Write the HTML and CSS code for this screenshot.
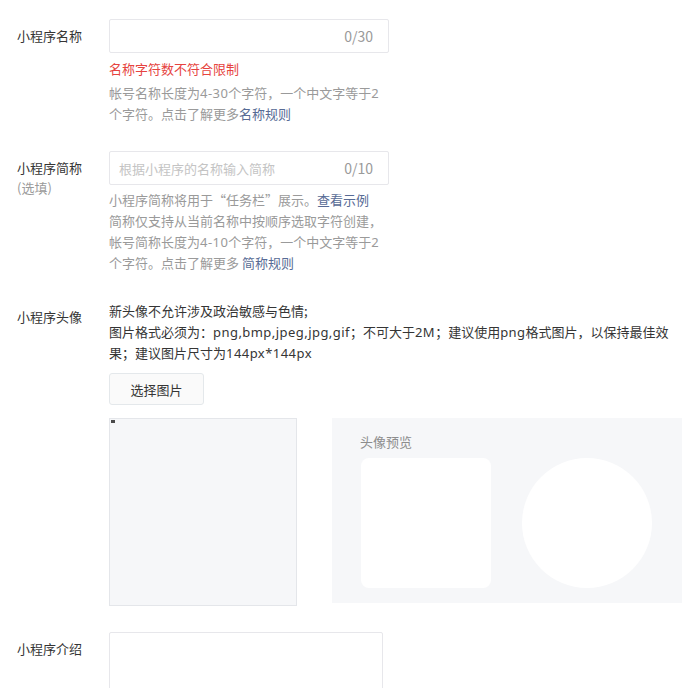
FILE: index.html
```html
<!DOCTYPE html>
<html lang="zh-CN">
<head>
<meta charset="utf-8">
<title>小程序信息</title>
<link rel="stylesheet" href="styles.css">
</head>
<body>
<div class="form">
  <div class="row">
    <div class="label">小程序名称</div>
    <div class="content">
      <div class="input"><span class="value"></span><span class="counter">0/30</span></div>
      <div class="error">名称字符数不符合限制</div>
      <div class="tips">帐号名称长度为<span class="lt">4-30</span>个字符，一个中文字等于<span class="lt">2</span><br>个字符。点击了解更多<a class="link" href="#">名称规则</a></div>
    </div>
  </div>

  <div class="row">
    <div class="label">小程序简称<div class="optional">(选填)</div></div>
    <div class="content">
      <div class="input"><span class="placeholder">根据小程序的名称输入简称</span><span class="counter">0/10</span></div>
      <div class="tips tips-short">小程序简称将用于“任务栏”展示。<a class="link" href="#">查看示例</a><br>简称仅支持从当前名称中按顺序选取字符创建，<br>帐号简称长度为<span class="lt">4-10</span>个字符，一个中文字等于<span class="lt">2</span><br>个字符。点击了解更多 <a class="link" href="#">简称规则</a></div>
    </div>
  </div>

  <div class="row row-avatar">
    <div class="label">小程序头像</div>
    <div class="content">
      <div class="desc">新头像不允许涉及政治敏感与色情;<br>图片格式必须为：<span class="lt">png,bmp,jpeg,jpg,gif</span>；不可大于<span class="lt">2M</span>；建议使用<span class="lt">png</span>格式图片，以保持最佳效<br>果；建议图片尺寸为<span class="lt">144px*144px</span></div>
      <button class="btn" type="button">选择图片</button>
      <div class="gallery">
        <div class="crop"><span class="broken"></span></div>
        <div class="preview">
          <div class="preview-title">头像预览</div>
          <div class="preview-items">
            <div class="pv-square"></div>
            <div class="pv-circle"></div>
          </div>
        </div>
      </div>
    </div>
  </div>

  <div class="row">
    <div class="label">小程序介绍</div>
    <div class="content">
      <div class="textarea"></div>
    </div>
  </div>
</div>
</body>
</html>
```

FILE: styles.css
```css
* { box-sizing: border-box; }

html, body {
  margin: 0;
  padding: 0;
  background: #ffffff;
}

body {
  font-family: "Noto Sans CJK SC", "Noto Sans", sans-serif;
  font-size: 13px;
  line-height: 21px;
  color: #353535;
}

.form {
  padding-top: 19px;
}

.row {
  display: flex;
  align-items: flex-start;
  margin-bottom: 27px;
}

.row-avatar {
  margin-bottom: 26px;
}

.label {
  flex: 0 0 109px;
  padding-left: 17px;
  padding-top: 6px;
  line-height: 21px;
  color: #353535;
}

.optional {
  color: #9a9a9a;
  line-height: 19px;
}

.content {
  flex: none;
}

.input {
  width: 280px;
  height: 34px;
  border: 1px solid #e7e7eb;
  border-radius: 2px;
  display: flex;
  align-items: center;
  justify-content: space-between;
  padding: 0 15px 0 9px;
}

.placeholder {
  color: #c4c4c4;
}

.counter {
  font-size: 14px;
  color: #9a9a9a;
  margin-left: auto;
}

.error {
  color: #e64340;
  margin-top: 5px;
}

.tips {
  color: #9a9a9a;
  margin-top: 3px;
  white-space: nowrap;
}

.tips-short {
  margin-top: 4px;
}

.lt {
  font-family: "Noto Sans", "Noto Sans CJK SC", sans-serif;
  letter-spacing: 0.45px;
  line-height: 13px;
}

.link {
  color: #576b95;
  text-decoration: none;
}

.desc {
  white-space: nowrap;
  color: #353535;
}

.btn {
  display: block;
  margin-top: 10px;
  width: 95px;
  height: 32px;
  padding: 0;
  border: 1px solid #e4e8eb;
  border-radius: 3px;
  background: #fafafa;
  font-family: inherit;
  font-size: 13px;
  color: #353535;
}

.gallery {
  display: flex;
  align-items: flex-start;
  gap: 35px;
  margin-top: 13px;
}

.crop {
  width: 188px;
  height: 188px;
  border: 1px solid #e4e6ea;
  background: #f6f7f9;
}

.broken {
  display: block;
  width: 4px;
  height: 3px;
  margin: 1px 0 0 1px;
  background: #4a4a4a;
}

.preview {
  width: 350px;
  height: 185px;
  background: #f6f7f9;
  padding: 13px 28px 0;
}

.preview-title {
  color: #8d8d8d;
  line-height: 21px;
}

.preview-items {
  display: flex;
  gap: 31px;
  margin-top: 6px;
  padding-left: 1px;
}

.pv-square {
  width: 130px;
  height: 130px;
  background: #ffffff;
  border-radius: 8px;
}

.pv-circle {
  width: 130px;
  height: 130px;
  background: #ffffff;
  border-radius: 50%;
}

.textarea {
  width: 274px;
  height: 100px;
  border: 1px solid #e7e7eb;
  border-radius: 2px;
}
```
